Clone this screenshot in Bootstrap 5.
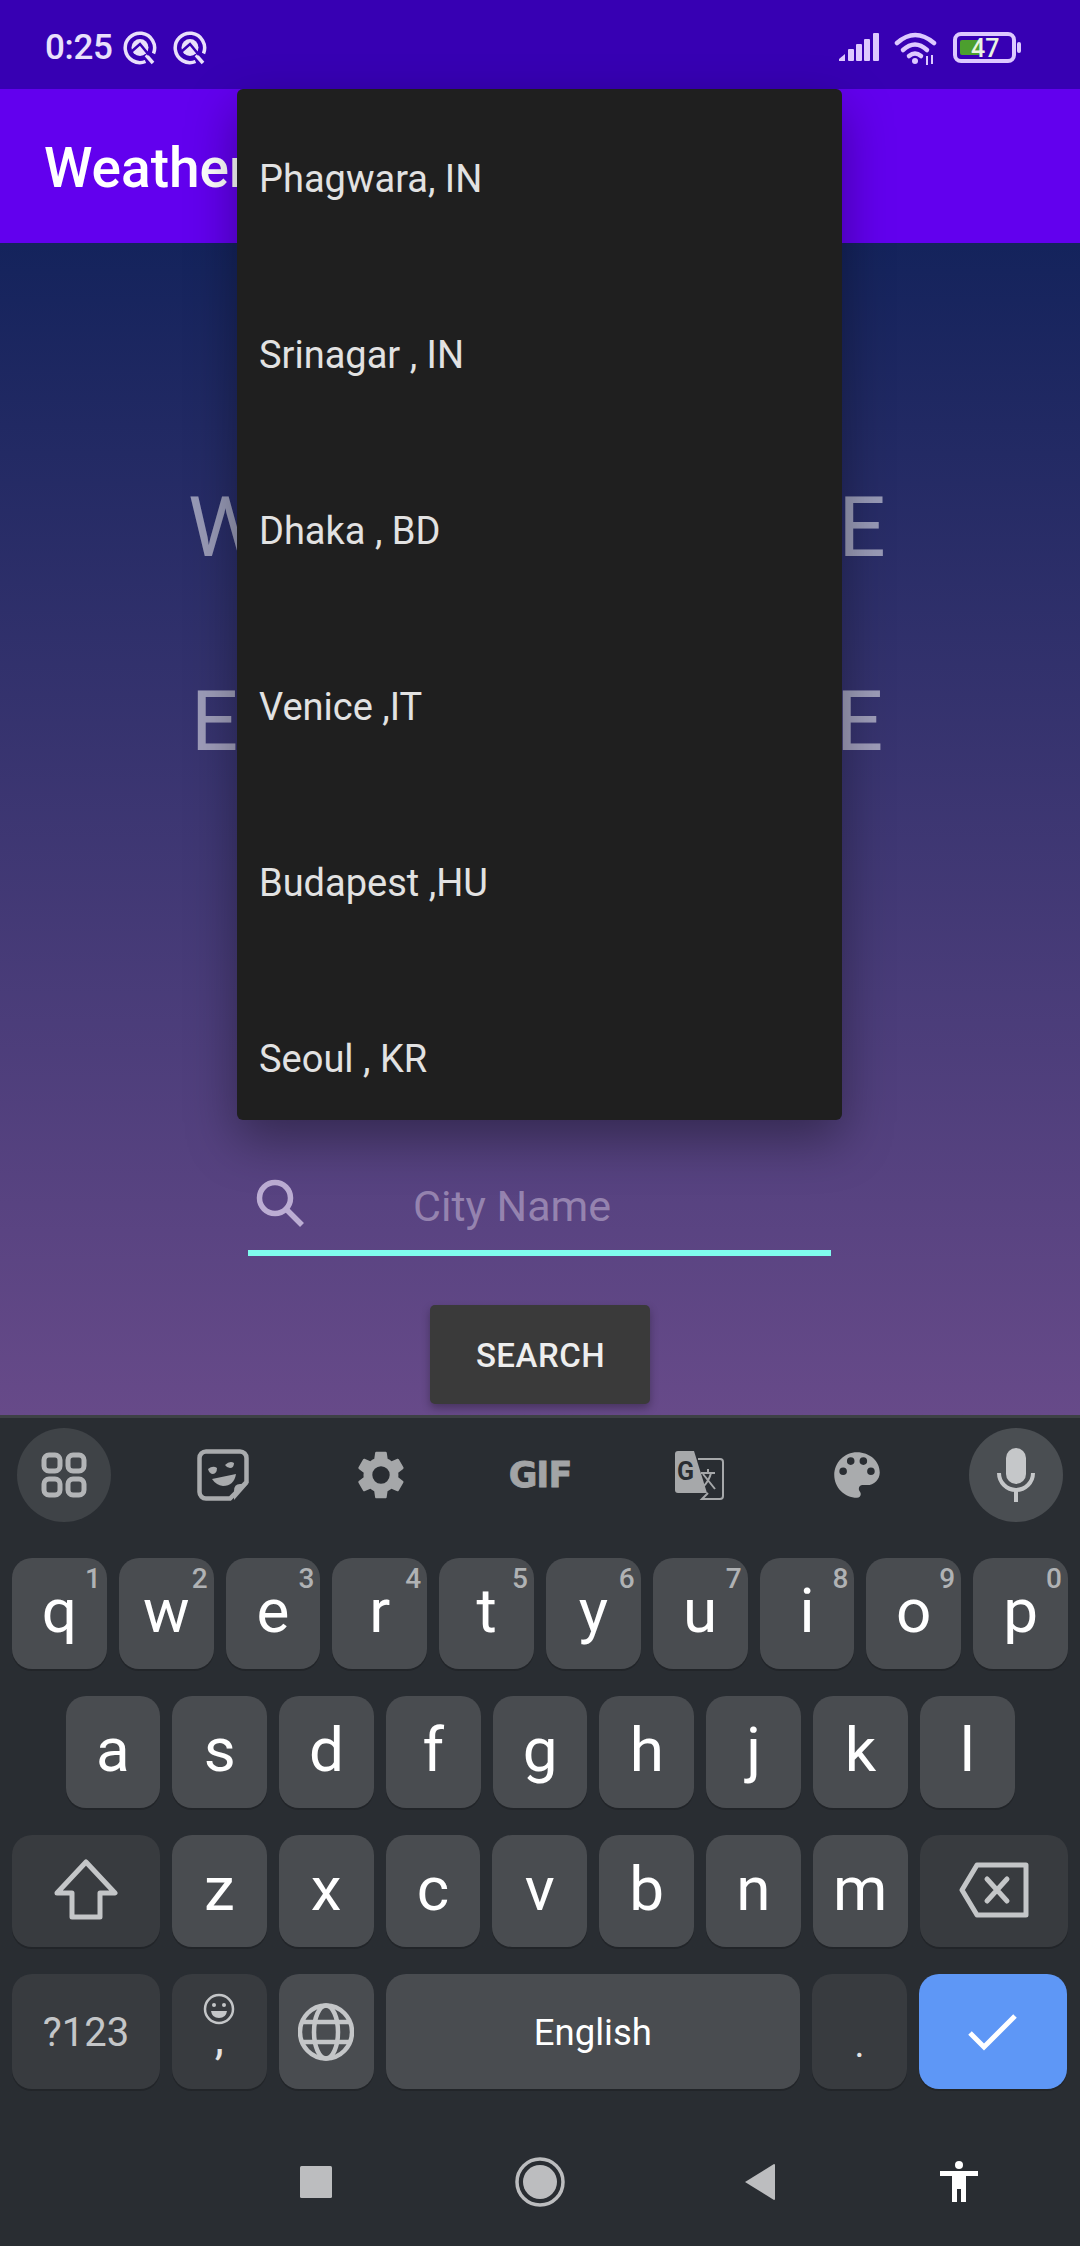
<!DOCTYPE html>
<html lang="en">
<head>
<meta charset="utf-8">
<title>Weather</title>
<link rel="stylesheet" href="https://cdn.jsdelivr.net/npm/bootstrap@5.3.0/dist/css/bootstrap.min.css">
<style>
html,body{margin:0;padding:0;width:1080px;height:2246px;overflow:hidden;background:#292d32;font-family:Roboto,sans-serif}
.screen{position:relative;width:1080px;height:2246px;overflow:hidden}
.status-strip{height:89px;background:#3700b3;color:#e9e0fb;padding-left:45px;padding-right:59px;padding-top:6px}
.status-time{font-size:35px;font-weight:500;line-height:1;letter-spacing:-.3px;width:77.5px}
.status-ic{display:block}
.app-strip{height:154px;background:#6200ee;color:#fff;padding-left:44px;padding-top:5px;font-size:55px;font-weight:500;line-height:149px;white-space:nowrap}
.sky{height:1172px;background:linear-gradient(180deg,#14235c 0%,#674a89 100%);padding-top:235px}
.hero-line{font-family:Roboto,sans-serif;font-weight:400;font-size:83px;line-height:100px;height:100px;color:rgba(255,255,255,.52);white-space:nowrap;margin:0}
.hero-one{padding-left:188px;letter-spacing:-.4px}
.hero-two{margin-top:94px;padding-left:191px;letter-spacing:-.8px}
.field-wrap{margin:388px 0 0 248px;width:583px}
.field-row{height:90px;padding-left:8px}
.field-ic{margin-top:-4px}
.field-text{font-size:43px;color:#9583af;margin-left:109px;line-height:1;margin-top:2px}
.field-line{height:6px;background:#80fbee}
.go-btn{display:block;margin:49px auto 0;width:220px;height:99px;background:#3a3a3a;color:#eee;border:0;border-radius:5px;font-size:33px;font-weight:500;letter-spacing:.5px;box-shadow:0 4px 8px rgba(0,0,0,.3);padding:3px 0 0 1px}
.city-menu{position:absolute;left:237px;top:89px;width:605px;height:1031px;background:#1f1f1f;border-radius:6px;overflow:hidden;box-shadow:0 20px 50px rgba(0,0,0,.35);padding-top:2px}
.city-item{height:176px;line-height:176px;padding-left:22px;color:#e2e2e2;font-size:38px;white-space:nowrap}
.kb{height:831px;background:#292d32;border-top:3px solid #3d4145}
.kb-tools{height:140px;padding:10px 17px 0}
.tool{width:94px;height:94px;border-radius:50%}
.tool-on{background:#3f4347}
.tool-mic{background:#4a4e52}
.gif-mark{font-family:"DejaVu Sans",sans-serif;font-weight:700;font-size:35px;color:#a2a4a6;letter-spacing:-1px;line-height:1;-webkit-text-stroke:.8px #a2a4a6}
.kb-row{gap:12px;padding:0 12px;margin-bottom:27px}
.kb-row2{padding-left:65.5px}
.k{position:relative;width:94.8px;height:112px;background:#494c50;border-radius:20px;box-shadow:0 2px 0 #222529;color:#fff;font-size:62px;line-height:1;padding-bottom:5px;flex:none}
.k-wide{width:148px;background:#383b3f;padding-bottom:2px}
.k-fn{background:#383b3f}
.k-h1{height:111px}
.k-h4{height:115px;padding-bottom:0}
.k-space{width:414.6px;font-size:36.5px;padding-top:3px}
.k-sym{font-size:40px;color:#c4c6c8;padding-top:3px}
.k-done{background:#5e97f6}
.k-hint{position:absolute;top:4px;right:6px;font-size:28px;font-weight:500;color:#b0b2b4;line-height:1.2}
.k-face{padding-top:19px}
.k-comma{font-size:46px;line-height:40px;margin-top:-7px;color:#e4e4e4}
.k-dot{font-size:38px;margin-top:25px;color:#e4e4e4}
.soft-nav{padding-top:36px}
.nv{width:60px;height:60px}
.nv1{margin-left:286px}
.nv2{margin-left:164px}
.nv3{margin-left:160px}
.nv4{margin-left:139px}
</style>
</head>
<body>
<div class="screen">
  <div class="status-strip d-flex align-items-center">
    <span class="status-time">0:25</span>
    <svg class="status-ic" width="34" height="34" viewBox="0 0 34 34" fill="none" stroke="#e9e0fb"><path d="M22.500 30.500 A14.700 14.700 0 1 1 30.500 22.500" stroke-width="3.500"/><path d="M23 24 L30 32" stroke-width="3.500"/><circle cx="17" cy="16.500" r="8.500" fill="#e9e0fb" stroke="none"/><path d="M8 21 L17 13 L26 24" stroke="#3700b3" stroke-width="2.600"/></svg>
    <svg class="status-ic ms-3" width="34" height="34" viewBox="0 0 34 34" fill="none" stroke="#e9e0fb"><path d="M22.500 30.500 A14.700 14.700 0 1 1 30.500 22.500" stroke-width="3.500"/><path d="M23 24 L30 32" stroke-width="3.500"/><circle cx="17" cy="16.500" r="8.500" fill="#e9e0fb" stroke="none"/><path d="M8 21 L17 13 L26 24" stroke="#3700b3" stroke-width="2.600"/></svg>
    <div class="flex-grow-1"></div>
    <svg class="status-ic" width="182" height="34" viewBox="0 0 182 34">
      <g fill="#ddc9ff">
        <path d="M0 28 L6 23 V30 H0Z"/><rect x="9" y="18" width="6" height="12" rx="1"/><rect x="17" y="13" width="6" height="17" rx="1"/><rect x="25" y="8" width="6" height="22" rx="1"/><rect x="34" y="2" width="6" height="28" rx="1"/>
      </g>
      <g fill="none" stroke="#ddc9ff" stroke-width="4.500" stroke-linecap="round">
        <path d="M58 12 Q76 -4 95 12"/><path d="M64 19 Q76 8 88 19"/><path d="M70 25 Q76 20 82 25"/>
      </g>
      <circle cx="76" cy="30" r="3" fill="#ddc9ff"/>
      <path d="M88 25 V34 M93 24 V33" stroke="#ddc9ff" stroke-width="2"/>
      <rect x="116" y="3" width="59" height="27" rx="6" fill="none" stroke="#ddc9ff" stroke-width="4"/>
      <rect x="121" y="9" width="20" height="15" rx="2" fill="#4c9f2e"/>
      <rect x="178" y="11" width="4" height="11" rx="2" fill="#ddc9ff"/>
      <text x="132" y="26" font-family="Roboto,sans-serif" font-weight="500" font-size="25" fill="#e9f4e2">47</text>
    </svg>
  </div>
  <div class="app-strip">Weather App</div>
  <div class="sky">
    <p class="hero-line hero-one">WEATHER UPDATE</p>
    <p class="hero-line hero-two">ENTER CITY NAME</p>
    <div class="field-wrap">
      <div class="field-row d-flex align-items-center">
        <svg class="field-ic" width="48" height="48" viewBox="0 0 48 48" fill="none" stroke="#bcadd3" stroke-width="5.500"><circle cx="19" cy="19" r="15.500"/><path d="M30 30 L46 46"/></svg>
        <span class="field-text">City Name</span>
      </div>
      <div class="field-line"></div>
    </div>
    <button class="go-btn" type="button">SEARCH</button>
  </div>
  <div class="city-menu">
    <div class="city-item">Phagwara, IN</div>
    <div class="city-item">Srinagar , IN</div>
    <div class="city-item">Dhaka , BD</div>
    <div class="city-item">Venice ,IT</div>
    <div class="city-item">Budapest ,HU</div>
    <div class="city-item">Seoul , KR</div>
  </div>
  <div class="kb">
    <div class="kb-tools d-flex justify-content-between">
      <div class="tool tool-on d-flex align-items-center justify-content-center">
        <svg width="46" height="46" viewBox="0 0 46 46" fill="none" stroke="#b3b5b7" stroke-width="5"><rect x="3" y="3" width="16" height="16" rx="5"/><rect x="27" y="3" width="16" height="16" rx="5"/><rect x="3" y="27" width="16" height="16" rx="5"/><rect x="27" y="27" width="16" height="16" rx="5"/></svg>
      </div>
      <div class="tool d-flex align-items-center justify-content-center">
        <svg width="52" height="52" viewBox="0 0 52 52" fill="none"><path d="M9 2.500 H43 a6.500 6.500 0 0 1 6.500 6.500 V33 L33 49.500 H9 a6.500 6.500 0 0 1 -6.500 -6.500 V9 a6.500 6.500 0 0 1 6.500 -6.500Z" stroke="#a9abad" stroke-width="4.500"/><path d="M51 35 H43 Q37 35 37 42 V51Z" fill="#a9abad"/><path d="M11 20 Q16 16 20 19 Q20 25 15 25 Q12 24 11 20Z" fill="#a9abad"/><path d="M28 16 Q33 11 37 14 Q37 19 33 19 Q30 19 28 16Z" fill="#a9abad"/><path d="M15 30 L39 25 Q37 37 26 37 Q19 36 15 30Z" fill="#a9abad"/></svg>
      </div>
      <div class="tool d-flex align-items-center justify-content-center">
        <svg width="58" height="58" viewBox="0 0 24 24" fill="#a5a7a9"><path d="M19.140 12.940c.04-.3.06-.61.06-.94s-.02-.64-.07-.94l2.030-1.580a.5.5 0 0 0 .12-.64l-1.920-3.320a.5.5 0 0 0-.6-.22l-2.390.96a7 7 0 0 0-1.620-.94l-.36-2.540a.5.5 0 0 0-.49-.42h-3.840a.5.5 0 0 0-.48.42l-.36 2.540c-.59.24-1.130.56-1.620.94l-2.390-.96a.5.5 0 0 0-.59.22L2.700 8.840a.47.47 0 0 0 .12.64l2.030 1.580c-.05.3-.09.63-.09.94s.02.64.07.94l-2.030 1.580a.5.5 0 0 0-.12.64l1.920 3.320c.12.22.37.29.59.22l2.390-.96c.5.38 1.030.7 1.620.94l.36 2.540c.05.24.24.42.48.42h3.840c.24 0 .44-.18.47-.42l.36-2.540c.59-.24 1.130-.56 1.620-.94l2.390.96c.22.08.47 0 .59-.22l1.920-3.320a.46.46 0 0 0-.12-.64zM12 15.600a3.600 3.600 0 1 1 0-7.200 3.600 3.600 0 0 1 0 7.200z"/></svg>
      </div>
      <div class="tool d-flex align-items-center justify-content-center"><span class="gif-mark">GIF</span></div>
      <div class="tool d-flex align-items-center justify-content-center">
        <svg width="50" height="50" viewBox="0 0 50 50"><path d="M4 1 H20 L33 43 H4 a3 3 0 0 1 -3 -3 V4 a3 3 0 0 1 3 -3Z" fill="#a6a8aa"/><path d="M24 9 H46 a3 3 0 0 1 3 3 V46 a3 3 0 0 1 -3 3 H28 L34 43" fill="none" stroke="#a6a8aa" stroke-width="2"/><text x="3" y="30" font-family="Roboto,sans-serif" font-weight="700" font-size="25" fill="#292d32">G</text><path d="M27 23 H41 M34 19 V23 M29 24 L41 39 M37 23 Q35 31 29 37" fill="none" stroke="#a6a8aa" stroke-width="2"/></svg>
      </div>
      <div class="tool d-flex align-items-center justify-content-center">
        <svg width="52" height="52" viewBox="0 0 24 24" fill="#a9abad"><path d="M12 1.500C6.200 1.500 1.500 6.200 1.500 12S6.200 22.500 12 22.500c1 0 1.750-.8 1.750-1.750 0-.45-.18-.86-.46-1.170-.28-.32-.46-.72-.46-1.170 0-.97.78-1.750 1.750-1.750h2.060c3.220 0 5.860-2.640 5.860-5.860C22.500 5.600 17.800 1.500 12 1.500zM5.600 12a1.750 1.750 0 1 1 0-3.500 1.750 1.750 0 0 1 0 3.500zm3.500-4.670a1.750 1.750 0 1 1 0-3.500 1.750 1.750 0 0 1 0 3.500zm5.830 0a1.750 1.750 0 1 1 0-3.500 1.750 1.750 0 0 1 0 3.500zm3.500 4.670a1.750 1.750 0 1 1 0-3.500 1.750 1.750 0 0 1 0 3.500z"/></svg>
      </div>
      <div class="tool tool-mic d-flex align-items-center justify-content-center">
        <svg width="40" height="54" viewBox="0 0 40 54"><rect x="10" y="0" width="20" height="36" rx="10" fill="#c5c7c9"/><path d="M3 25 a17 17 0 0 0 34 0" fill="none" stroke="#c5c7c9" stroke-width="4"/><rect x="18" y="42" width="4" height="12" fill="#c5c7c9"/></svg>
      </div>
    </div>
    <div class="kb-row d-flex">
      <div class="k k-h1 d-flex align-items-center justify-content-center">q<span class="k-hint">1</span></div>
      <div class="k k-h1 d-flex align-items-center justify-content-center">w<span class="k-hint">2</span></div>
      <div class="k k-h1 d-flex align-items-center justify-content-center">e<span class="k-hint">3</span></div>
      <div class="k k-h1 d-flex align-items-center justify-content-center">r<span class="k-hint">4</span></div>
      <div class="k k-h1 d-flex align-items-center justify-content-center">t<span class="k-hint">5</span></div>
      <div class="k k-h1 d-flex align-items-center justify-content-center">y<span class="k-hint">6</span></div>
      <div class="k k-h1 d-flex align-items-center justify-content-center">u<span class="k-hint">7</span></div>
      <div class="k k-h1 d-flex align-items-center justify-content-center">i<span class="k-hint">8</span></div>
      <div class="k k-h1 d-flex align-items-center justify-content-center">o<span class="k-hint">9</span></div>
      <div class="k k-h1 d-flex align-items-center justify-content-center">p<span class="k-hint">0</span></div>
    </div>
    <div class="kb-row kb-row2 d-flex">
      <div class="k d-flex align-items-center justify-content-center">a</div>
      <div class="k d-flex align-items-center justify-content-center">s</div>
      <div class="k d-flex align-items-center justify-content-center">d</div>
      <div class="k d-flex align-items-center justify-content-center">f</div>
      <div class="k d-flex align-items-center justify-content-center">g</div>
      <div class="k d-flex align-items-center justify-content-center">h</div>
      <div class="k d-flex align-items-center justify-content-center">j</div>
      <div class="k d-flex align-items-center justify-content-center">k</div>
      <div class="k d-flex align-items-center justify-content-center">l</div>
    </div>
    <div class="kb-row d-flex">
      <div class="k k-wide d-flex align-items-center justify-content-center">
        <svg width="64" height="62" viewBox="0 0 64 62" fill="none" stroke="#c4c6c8" stroke-width="5" stroke-linejoin="round"><path d="M32 3 L61 34 H46 V58 H18 V34 H3Z"/></svg>
      </div>
      <div class="k d-flex align-items-center justify-content-center">z</div>
      <div class="k d-flex align-items-center justify-content-center">x</div>
      <div class="k d-flex align-items-center justify-content-center">c</div>
      <div class="k d-flex align-items-center justify-content-center">v</div>
      <div class="k d-flex align-items-center justify-content-center">b</div>
      <div class="k d-flex align-items-center justify-content-center">n</div>
      <div class="k d-flex align-items-center justify-content-center">m</div>
      <div class="k k-wide d-flex align-items-center justify-content-center">
        <svg width="70" height="56" viewBox="0 0 70 56" fill="none" stroke="#c4c6c8" stroke-width="5" stroke-linejoin="round"><path d="M18 3 H67 V53 H18 L3 28Z"/><path d="M28 17 L48 39 M48 17 L28 39" stroke-linecap="round"/></svg>
      </div>
    </div>
    <div class="kb-row d-flex">
      <div class="k k-h4 k-wide k-sym d-flex align-items-center justify-content-center">?123</div>
      <div class="k k-h4 k-fn k-face d-flex flex-column align-items-center">
        <svg width="32" height="32" viewBox="0 0 32 32" fill="none" stroke="#c4c6c8" stroke-width="2.500"><circle cx="16" cy="16" r="14"/><circle cx="11" cy="12" r="2" fill="#c4c6c8" stroke="none"/><circle cx="21" cy="12" r="2" fill="#c4c6c8" stroke="none"/><path d="M8 18 H24 Q23 25 16 25 Q9 25 8 18Z" fill="#c4c6c8" stroke="none"/></svg>
        <span class="k-comma">,</span>
      </div>
      <div class="k k-h4 d-flex align-items-center justify-content-center">
        <svg width="56" height="58" viewBox="0 0 56 58" fill="none" stroke="#c4c6c8" stroke-width="4.500"><ellipse cx="28" cy="29" rx="26" ry="26.500"/><ellipse cx="28" cy="29" rx="12" ry="26.500"/><path d="M4 19 H52 M4 39 H52"/></svg>
      </div>
      <div class="k k-h4 k-space d-flex align-items-center justify-content-center">English</div>
      <div class="k k-h4 k-fn d-flex align-items-center justify-content-center"><span class="k-dot">.</span></div>
      <div class="k k-h4 k-wide k-done d-flex align-items-center justify-content-center">
        <svg width="50" height="38" viewBox="0 0 50 38" fill="none" stroke="#fff" stroke-width="5"><path d="M2 20 L16 34 L47 3"/></svg>
      </div>
    </div>
    <div class="soft-nav d-flex align-items-center">
      <div class="nv nv1 d-flex align-items-center justify-content-center"><svg width="32" height="32" viewBox="0 0 32 32"><rect width="32" height="32" rx="1.500" fill="#bcbdbf"/></svg></div>
      <div class="nv nv2 d-flex align-items-center justify-content-center"><svg width="50" height="50" viewBox="0 0 50 50"><circle cx="25" cy="25" r="23" fill="none" stroke="#bcbdbf" stroke-width="3.500"/><circle cx="25" cy="25" r="17" fill="#bcbdbf"/></svg></div>
      <div class="nv nv3 d-flex align-items-center justify-content-center"><svg width="32" height="38" viewBox="0 0 32 38"><path d="M1 19 L30 1 a1 1 0 0 1 1 1 V36 a1 1 0 0 1 -1 1Z" fill="#bcbdbf"/></svg></div>
      <div class="nv nv4 d-flex align-items-center justify-content-center"><svg width="38" height="42" viewBox="0 0 38 42"><circle cx="19" cy="4" r="4" fill="#fff"/><path d="M0 10 H38 V15 H26 V41 H21 V28 H17 V41 H12 V15 H0Z" fill="#fff"/></svg></div>
    </div>
  </div>
</div>
<script src="https://cdn.jsdelivr.net/npm/bootstrap@5.3.0/dist/js/bootstrap.bundle.min.js"></script>
</body>
</html>
